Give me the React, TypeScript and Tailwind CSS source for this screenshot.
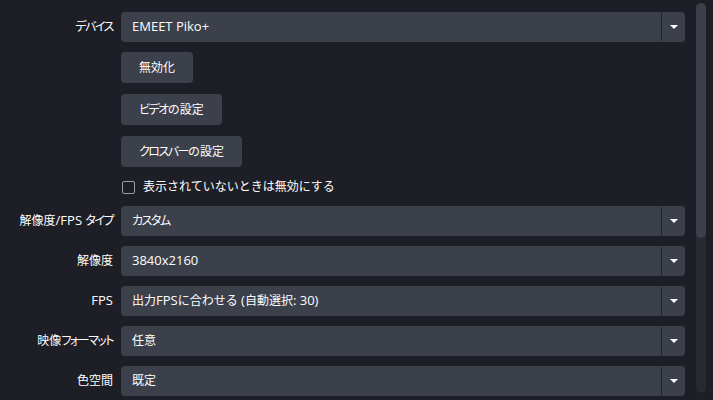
const font = { fontFamily: '"Open Sans", "Noto Sans CJK JP", sans-serif' };

// latin at 13px, CJK at 12px; katakana tightened like the original UI font
function T({ s }: { s: string }) {
  const parts = s.split(/([\u30a0-\u30ff]+|[\u3000-\u309f\u4e00-\u9fff\uff00-\uffef]+)/).filter(Boolean);
  return (
    <span>
      {parts.map((p, i) =>
        /^[\u30a0-\u30ff]+$/.test(p) ? (
          <span key={i} className="text-[12px] tracking-[-1.5px]" style={{ fontFeatureSettings: '"palt"' }}>
            {p}
          </span>
        ) : /^[\u3000-\u309f\u4e00-\u9fff\uff00-\uffef]+$/.test(p) ? (
          <span key={i} className="text-[12px]">
            {p}
          </span>
        ) : (
          <span key={i} className="whitespace-pre">{p}</span>
        )
      )}
    </span>
  );
}

function Combo({ value }: { value: string }) {
  return (
    <div className="flex h-[30px] items-stretch rounded-[4px] bg-[#3c404b]">
      <div className="flex flex-1 items-center pl-[11px] text-[13px] text-[#fefefe]">
        <T s={value} />
      </div>
      <div className="my-[1px] w-px bg-[#1f2128]" />
      <div className="flex w-[23px] items-center justify-center">
        <svg width="10" height="6" viewBox="0 0 10 6">
          <path d="M1 1h8L5 5z" fill="#ffffff" />
        </svg>
      </div>
    </div>
  );
}

function Row({ label, children, className = "" }: { label?: string; children: React.ReactNode; className?: string }) {
  return (
    <div className={`flex items-center ${className}`}>
      <div className="w-[114px] shrink-0 pr-px text-right text-[13px] text-[#fefefe]">{label && <T s={label} />}</div>
      <div className="ml-[7px] flex-1">{children}</div>
    </div>
  );
}

function Btn({ label }: { label: string }) {
  return (
    <button className="h-[31px] rounded-[4px] bg-[#3c404b] px-[18px] text-[13px] text-[#fefefe]">
      <T s={label} />
    </button>
  );
}

export default function App() {
  return (
    <div className="flex h-[400px] w-[713px] bg-[#1e1f26]" style={font}>
      {/* settings form */}
      <div className="flex flex-1 flex-col pr-[6px] pt-[12px]">
        <Row label="デバイス">
          <Combo value="EMEET Piko+" />
        </Row>
        <Row className="mt-[10px]">
          <Btn label="無効化" />
        </Row>
        <Row className="mt-[11px]">
          <Btn label="ビデオの設定" />
        </Row>
        <Row className="mt-[11px]">
          <Btn label="クロスバーの設定" />
        </Row>
        <Row className="mt-[10px] h-[20px]">
          <div className="flex items-center">
            <span className="ml-px h-[13px] w-[13px] rounded-[2px] border border-[#9a9ca3]" />
            <span className="ml-[8px] text-[13px] text-[#fefefe]">
              <T s="表示されていないときは無効にする" />
            </span>
          </div>
        </Row>
        <Row label="解像度/FPS タイプ" className="mt-[9px]">
          <Combo value="カスタム" />
        </Row>
        <Row label="解像度" className="mt-[10px]">
          <Combo value="3840x2160" />
        </Row>
        <Row label="FPS" className="mt-[10px]">
          <Combo value="出力FPSに合わせる (自動選択: 30)" />
        </Row>
        <Row label="映像フォーマット" className="mt-[10px]">
          <Combo value="任意" />
        </Row>
        <Row label="色空間" className="mt-[10px]">
          <Combo value="既定" />
        </Row>
      </div>

      {/* scrollbar */}
      <div className="ml-[5px] mr-[7px] mt-[3px] mb-[7px] flex w-[10px] flex-col rounded-[5px] bg-[#272a33]">
        <div className="h-[235px] rounded-[5px] bg-[#3c404b]" />
      </div>
    </div>
  );
}
